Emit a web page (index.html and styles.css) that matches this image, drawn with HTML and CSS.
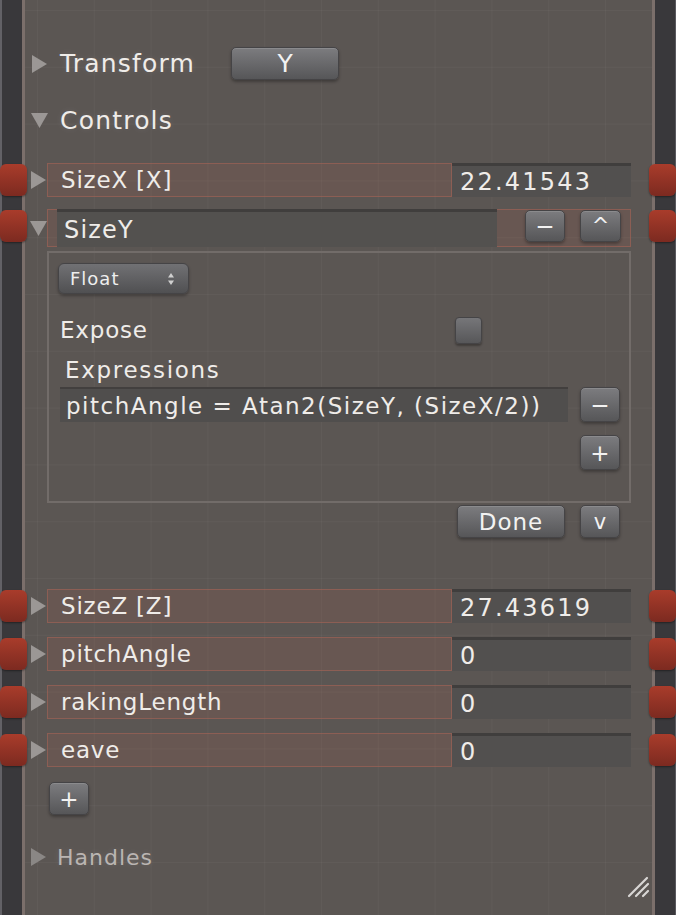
FILE: index.html
```html
<!DOCTYPE html>
<html lang="en">
<head>
    <meta charset="UTF-8">
    <meta name="viewport" content="width=device-width, initial-scale=1.0">
    <title>Node Controls</title>
    <link rel="stylesheet" href="styles.css">
</head>
<body>
    <div class="frame">
        <div class="edge edge-left"></div>
        <div class="node">
            <div class="section">
                <svg class="tri" viewBox="0 0 17 18"><path d="M1 0 L16 9 L1 18 Z"/></svg>
                <span class="section-title">Transform</span>
                <button class="btn btn-axis">Y</button>
            </div>
            <div class="section section-controls">
                <svg class="tri tri-down" viewBox="0 0 17 16"><path d="M0 1 L17 1 L8.5 16 Z"/></svg>
                <span class="section-title">Controls</span>
            </div>

            <div class="param param-first">
                <span class="pin pin-left"></span>
                <svg class="tri" viewBox="0 0 17 18"><path d="M1 0 L16 9 L1 18 Z"/></svg>
                <div class="param-label">SizeX [X]</div>
                <div class="param-value">22.41543</div>
                <span class="pin pin-right"></span>
            </div>
            <div class="param param-edit">
                <span class="pin pin-left"></span>
                <svg class="tri tri-down" viewBox="0 0 17 16"><path d="M0 1 L17 1 L8.5 16 Z"/></svg>
                <div class="edit-box">
                    <div class="name-field">SizeY</div>
                    <div class="edit-buttons">
                        <button class="btn btn-sq">&minus;</button>
                        <button class="btn btn-sq btn-caret">^</button>
                    </div>
                </div>
                <span class="pin pin-right"></span>
            </div>

            <div class="editor">
                <button class="popup">Float
                    <svg class="popup-arrows" viewBox="0 0 8 14"><path d="M4 1 L7 5.5 L1 5.5 Z M4 13 L7 8.5 L1 8.5 Z"/></svg>
                </button>
                <div class="editor-row">
                    <span class="editor-label">Expose</span>
                    <span class="checkbox"></span>
                </div>
                <div class="editor-heading">Expressions</div>
                <div class="expr-row">
                    <div class="expr-field">pitchAngle = Atan2(SizeY, (SizeX/2))</div>
                    <button class="btn btn-sq">&minus;</button>
                </div>
                <div class="expr-add">
                    <button class="btn btn-sq">+</button>
                </div>
            </div>
            <div class="editor-actions">
                <button class="btn btn-done">Done</button>
                <button class="btn btn-sq btn-v">v</button>
            </div>

            <div class="param param-gap">
                <span class="pin pin-left"></span>
                <svg class="tri" viewBox="0 0 17 18"><path d="M1 0 L16 9 L1 18 Z"/></svg>
                <div class="param-label">SizeZ [Z]</div>
                <div class="param-value">27.43619</div>
                <span class="pin pin-right"></span>
            </div>
            <div class="param">
                <span class="pin pin-left"></span>
                <svg class="tri" viewBox="0 0 17 18"><path d="M1 0 L16 9 L1 18 Z"/></svg>
                <div class="param-label">pitchAngle</div>
                <div class="param-value">0</div>
                <span class="pin pin-right"></span>
            </div>
            <div class="param">
                <span class="pin pin-left"></span>
                <svg class="tri" viewBox="0 0 17 18"><path d="M1 0 L16 9 L1 18 Z"/></svg>
                <div class="param-label">rakingLength</div>
                <div class="param-value">0</div>
                <span class="pin pin-right"></span>
            </div>
            <div class="param">
                <span class="pin pin-left"></span>
                <svg class="tri" viewBox="0 0 17 18"><path d="M1 0 L16 9 L1 18 Z"/></svg>
                <div class="param-label">eave</div>
                <div class="param-value">0</div>
                <span class="pin pin-right"></span>
            </div>

            <div class="add-row">
                <button class="btn btn-sq">+</button>
            </div>
            <div class="section section-muted">
                <svg class="tri" viewBox="0 0 17 18"><path d="M1 0 L16 9 L1 18 Z"/></svg>
                <span class="section-title">Handles</span>
            </div>

            <svg class="grip" viewBox="0 0 24 24">
                <path d="M2 22 L20 4 M9 22 L21 10 M16 22 L21 17"/>
            </svg>
        </div>
        <div class="edge edge-right"></div>
    </div>
</body>
</html>
```

FILE: styles.css
```css
body {
    margin: 0;
    background-color: #38373a;
    font-family: "DejaVu Sans", Verdana, sans-serif;
    color: #efece9;
}
.frame {
    display: flex;
    width: 676px;
    height: 915px;
    overflow: hidden;
}
.edge {
    background-color: #39383b;
}
.edge-left {
    width: 20px;
    border-left: 2px solid #626166;
}
.edge-right {
    width: 20px;
    border-right: 1px solid #5a595e;
}
.node {
    position: relative;
    flex: 1;
    border-left: 3px solid #7b6f6b;
    border-right: 3px solid #7b6f6b;
    background-color: #5b5653;
    background-image:
        linear-gradient(rgba(255, 255, 255, 0.03) 1px, transparent 1px),
        linear-gradient(90deg, rgba(255, 255, 255, 0.03) 1px, transparent 1px);
    background-size: 56.8px 56.8px;
    background-position: 12px 10px;
}
.tri {
    width: 17px;
    height: 18px;
    flex: none;
    fill: #9b9795;
}
.tri-down {
    height: 16px;
}

/* section headers */
.section {
    display: flex;
    align-items: center;
    height: 33px;
    margin-top: 47px;
    padding-left: 6px;
}
.section-title {
    margin-left: 12px;
    font-size: 25px;
    letter-spacing: 1.2px;
    text-shadow: 0 0 6px rgba(255, 255, 255, 0.12);
}
.section-controls {
    margin-top: 25px;
    height: 30px;
}
.section-muted {
    margin-top: 27px;
    height: 30px;
    padding-left: 5px;
}
.section-muted .tri {
    fill: #8a8785;
}
.section-muted .section-title {
    margin-left: 10px;
    font-size: 22px;
    letter-spacing: 1px;
    color: #bab5b2;
}

/* buttons */
.btn {
    display: flex;
    align-items: center;
    justify-content: center;
    padding: 0;
    border: 1px solid #454446;
    border-radius: 5px;
    background: linear-gradient(#7c7c7f, #565658);
    box-shadow: 0 2px 3px rgba(0, 0, 0, 0.3), inset 0 1px 0 rgba(255, 255, 255, 0.12);
    font-family: inherit;
    color: #f2f2f2;
    font-size: 23px;
    cursor: pointer;
}
.btn-axis {
    width: 108px;
    height: 33px;
    margin-left: 36px;
    font-size: 25px;
}
.btn-sq {
    width: 40px;
    height: 34px;
    flex: none;
}
.btn-caret {
    width: 41px;
    font-size: 21px;
}
.btn-done {
    width: 108px;
    height: 33px;
    letter-spacing: 1px;
}
.btn-v {
    height: 33px;
    font-size: 21px;
}

/* parameter rows */
.param {
    position: relative;
    display: flex;
    align-items: stretch;
    height: 34px;
    margin-top: 14px;
    padding-left: 5px;
}
.param .tri {
    align-self: center;
}
.param-first {
    margin-top: 28px;
}
.param-gap {
    margin-top: 51px;
}
.param-label {
    display: flex;
    align-items: center;
    width: 405px;
    box-sizing: border-box;
    padding-left: 13px;
    border: 1px solid rgba(170, 100, 85, 0.55);
    background-color: rgba(160, 95, 80, 0.2);
    font-size: 23px;
    letter-spacing: 0.8px;
}
.param-value {
    display: flex;
    align-items: center;
    width: 179px;
    box-sizing: border-box;
    padding-left: 8px;
    border-top: 3px solid #403e3d;
    background-color: #52504f;
    font-size: 24px;
    letter-spacing: 2.2px;
}
.pin {
    position: absolute;
    top: 1px;
    width: 27px;
    height: 32px;
    border-radius: 6px;
    background: linear-gradient(#a93c2b, #7c2a20);
    box-shadow: 0 1px 2px rgba(0, 0, 0, 0.4);
}
.pin-left {
    left: -25px;
}
.pin-right {
    right: -24px;
}

.param-edit {
    margin-top: 12px;
    height: 38px;
}
.edit-box {
    display: flex;
    width: 584px;
    box-sizing: border-box;
    padding-left: 9px;
    border: 1px solid rgba(170, 100, 85, 0.55);
    background-color: rgba(160, 95, 80, 0.2);
}
.name-field {
    display: flex;
    align-items: center;
    width: 440px;
    box-sizing: border-box;
    margin: -1px 0;
    padding-left: 7px;
    border-top: 3px solid #403e3d;
    background-color: #53514f;
    font-size: 24px;
    letter-spacing: 1.2px;
}
.edit-buttons {
    display: flex;
    align-items: flex-start;
    gap: 15px;
    padding-left: 28px;
}
.edit-buttons .btn-sq {
    height: 32px;
}

/* expanded editor */
.editor {
    height: 252px;
    box-sizing: border-box;
    margin: 4px 0 0 22px;
    width: 584px;
    border: 2px solid #726c69;
}
.popup {
    display: flex;
    align-items: center;
    justify-content: space-between;
    width: 131px;
    height: 31px;
    margin: 10px 0 0 9px;
    padding: 0 13px 0 11px;
    border: 1px solid #454446;
    border-radius: 6px;
    background: linear-gradient(#717174, #505052);
    box-shadow: 0 2px 3px rgba(0, 0, 0, 0.3);
    font-family: inherit;
    font-size: 18px;
    letter-spacing: 1px;
    color: #eeeeee;
}
.popup-arrows {
    width: 8px;
    height: 14px;
    fill: #cfcfcf;
}
.editor-row {
    display: flex;
    align-items: center;
    height: 30px;
    margin-top: 21px;
    padding-left: 11px;
}
.editor-label {
    width: 395px;
    font-size: 23px;
    letter-spacing: 0.8px;
}
.checkbox {
    width: 27px;
    height: 27px;
    box-sizing: border-box;
    border: 1px solid #454446;
    border-radius: 4px;
    background: linear-gradient(#767679, #575759);
    box-shadow: 0 2px 2px rgba(0, 0, 0, 0.3);
}
.editor-heading {
    display: flex;
    align-items: center;
    height: 30px;
    margin-top: 10px;
    padding-left: 16px;
    font-size: 23px;
    letter-spacing: 1.7px;
}
.expr-row {
    display: flex;
    align-items: center;
    gap: 12px;
    margin-top: 2px;
    padding-left: 11px;
}
.expr-field {
    display: flex;
    align-items: center;
    width: 508px;
    height: 35px;
    box-sizing: border-box;
    padding-left: 6px;
    border-top: 2px solid #423f3e;
    background-color: #504e4d;
    font-size: 23px;
    letter-spacing: 1.5px;
    white-space: nowrap;
    overflow: hidden;
}
.expr-row .btn-sq,
.expr-add .btn-sq {
    height: 35px;
}
.expr-add {
    display: flex;
    margin-top: 13px;
    padding-left: 531px;
}
.editor-actions {
    display: flex;
    gap: 15px;
    margin-top: 2px;
    padding-left: 432px;
}
.add-row {
    display: flex;
    margin-top: 15px;
    padding-left: 24px;
}
.add-row .btn-sq {
    height: 33px;
}

.grip {
    position: absolute;
    right: 1px;
    bottom: 17px;
    width: 24px;
    height: 24px;
    fill: none;
    stroke: #d8d6d4;
    stroke-width: 2.2;
    stroke-linecap: round;
}
```
